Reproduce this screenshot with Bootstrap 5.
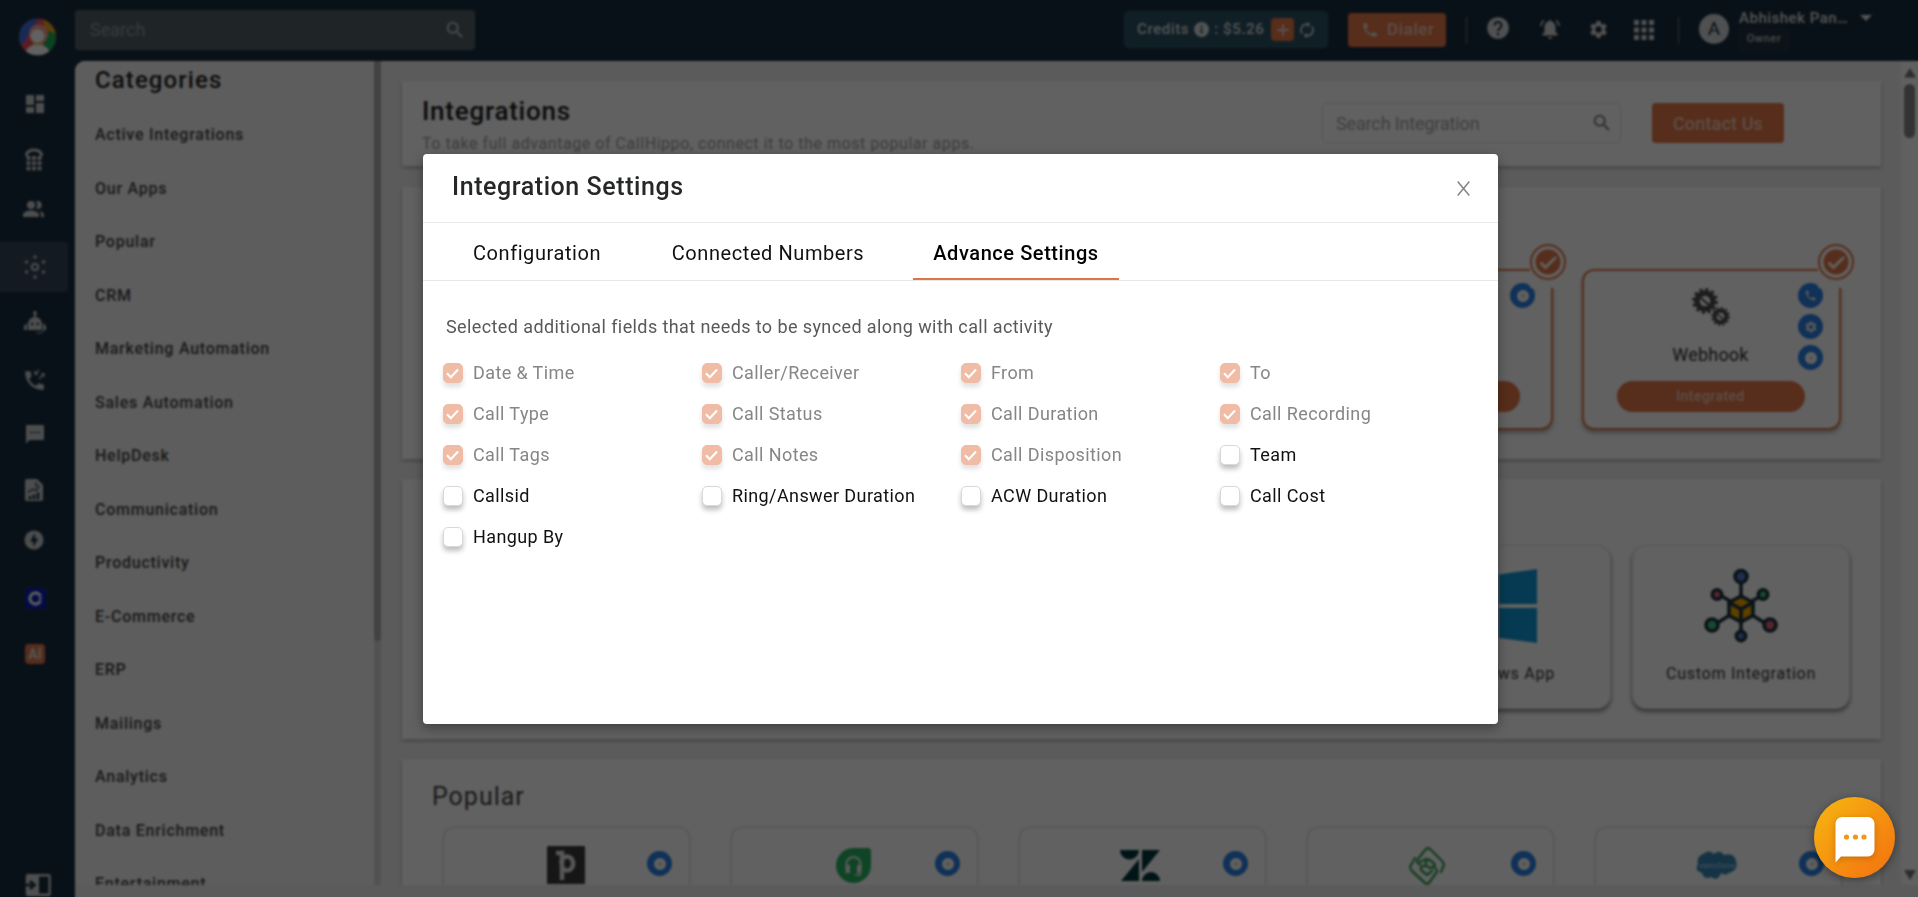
<!DOCTYPE html>
<html lang="en">
<head>
<meta charset="utf-8">
<title>Integration Settings</title>
<link href="https://cdn.jsdelivr.net/npm/bootstrap@5.3.0/dist/css/bootstrap.min.css" rel="stylesheet">
<style>
:root{--navy:#1a2f3f;--brand:#e57647;--blue:#2b80e6;--soft:#c8ccce}
body{font-family:Roboto,"Liberation Sans",sans-serif;letter-spacing:.6px;height:897px;overflow:hidden;background:var(--navy);color:#333}
svg{display:block;flex:none}
.app-shell{height:897px;background:var(--navy)}
.rail{width:75px;flex:none;position:relative;color:var(--soft)}
.rail .cell{height:50px;width:68px;padding-left:2px}
.rail .cell.on{background:#35465a;border-radius:0 4px 4px 0}
.topbar{height:61px;color:#d8dcde}
.find{width:400px;height:40px;background:#536068;border-radius:4px;color:#93999d;font-size:18px;letter-spacing:0;padding:0 9px 0 15px;margin-top:-2px}
.credits{width:204px;height:37px;background:#2c5264;border-radius:5px;font-size:15px;font-weight:500;padding-left:13px;margin-top:-2px}
.plus{width:23px;height:23px;background:var(--brand);border-radius:4px;margin-left:7px}
.dialer{width:98px;height:34px;background:var(--brand);border-radius:4px;font-size:17px;font-weight:500;color:#efcdbf;margin-left:20px;padding-left:13px;margin-top:-2px}
.vline{width:1px;height:27px;background:#66747e}
.user{font-size:15px;font-weight:500;line-height:20px;height:20px}
.user span{width:121px;letter-spacing:.5px}
.owner{background:#21343f;border-radius:3px;width:50px;height:23px;font-size:11px;font-weight:500;color:#b9c0c4}
.panel-area{height:836px;border-radius:10px 0 0 0;overflow:hidden;background:#f0f0f0}
.cats{width:299px;height:824px;overflow:hidden;background:#f5f5f5;padding-left:20px}
.cats h2{font-size:24px;font-weight:500;letter-spacing:1.1px;line-height:28px;margin:5px 0 14px;color:#222}
.cats li{height:53.5px;line-height:53.5px;font-size:16px;font-weight:500;letter-spacing:.75px;color:#444}
.bar-v{width:7px;height:824px;background:#d8d8d8}
.bar-v div{height:580px;background:#adadad;border-radius:0 0 4px 4px}
.feed{width:1520px;height:824px;overflow:hidden;padding:20px 20px 0 21px}
.sheet{background:#fff;box-shadow:0 2px 4px rgba(0,0,0,.25);margin-bottom:20px}
.page-title{font-size:26px;font-weight:500;line-height:30px;letter-spacing:.75px;color:#1c1c1c}
.page-sub{font-size:16px;line-height:24px;margin-top:6px;color:#a0a0a0;letter-spacing:.55px}
.find-int{width:299px;height:40px;margin-top:22px;padding:0 7px 0 13px;font-size:18px;color:#a6a6a6;letter-spacing:-.15px}
.contact{width:132px;height:40px;margin:22px 0 0 31px;background:var(--brand);border-radius:4px;font-size:18px;font-weight:500;color:#efcdbf;letter-spacing:.15px}
.page-bar{width:17px;height:824px;background:#fcfcfc}
.tile{border-radius:12px;background:#fff;position:relative;flex:none}
.tile.on{width:259px;height:161px;border:2px solid var(--brand);box-shadow:0 3px 4px rgba(0,0,0,.3)}
.tile.own{width:218px;height:164px;border:1px solid #e4e4e4;box-shadow:0 3px 4px rgba(0,0,0,.45);border-radius:14px}
.tile.pop{width:247px;height:150px;border:1px solid #ddd;box-shadow:0 0 3px rgba(0,0,0,.15)}
.tile.pop>svg{margin-right:2px}
.tile.pop .disc{margin-top:11px}
.tick{position:absolute;right:-17px;top:-27px;width:38px;height:44px;background:#fff}
.dots{position:absolute;right:16px;top:12px}
.pop .dots{right:17px}
.disc{width:25px;height:25px;border-radius:50%;background:var(--blue)}
.pill{width:188px;height:31px;border-radius:16px;background:var(--brand);color:#efcdbf;font-size:14px;font-weight:500;letter-spacing:.45px;margin-right:2px}
.foot{height:12px;background:#eeeef2}
.shade{position:absolute;inset:0;background:rgba(0,0,0,.62);backdrop-filter:blur(1.1px)}
.dlg{position:absolute;left:423px;top:154px;width:1075px;height:570px;background:#fff;border-radius:4px;box-shadow:0 4px 12px rgba(0,0,0,.35)}
.dlg-head{height:69px;border-bottom:1px solid #e8e8e8;padding:0 28px 0 29px}
.dlg-head h1{font-size:25px;font-weight:500;color:#262828;letter-spacing:.57px;margin:0 0 2px}
.tabs{height:58px;border-bottom:1px solid #e8e8e8;padding-left:31px;font-size:20px;letter-spacing:.57px;color:#111}
.tabs div{height:57px;line-height:60px;text-align:center;border-bottom:2px solid transparent}
.tabs .cur{border-color:#df7646;font-weight:500;color:#000}
.note{font-size:18px;line-height:24px;margin:34px 0 13px 23px;color:#595959;letter-spacing:.4px}
.opts{display:grid;grid-template-columns:repeat(4,259px);grid-auto-rows:41px;padding-left:20px;font-size:18px;color:#111;letter-spacing:.4px}
.box{width:20px;height:20px;border-radius:5px;border:1px solid #d9d9d9;background:#fff;box-shadow:0 4px 5px rgba(0,0,0,.25);margin-right:10px;flex:none}
.off{color:#868686}
.off .box{background:#f0bca6;border-color:#f0bca6;box-shadow:0 4px 5px rgba(0,0,0,.12)}
.chat{position:absolute;left:1814px;top:797px;width:81px;height:81px;border-radius:50%;background:linear-gradient(135deg,#f6b411 5%,#f4730f 95%);box-shadow:0 2px 8px rgba(0,0,0,.4)}
</style>
</head>
<body>
<svg width="0" height="0" style="position:absolute">
 <defs>
  <symbol id="search" viewBox="0 0 24 24"><path d="M15.500 14h-.79l-.28-.27A6.470 6.470 0 0 0 16 9.500 6.500 6.500 0 1 0 9.500 16c1.610 0 3.090-.59 4.230-1.570l.27.28v.79l5 4.990L20.490 19zm-6 0a4.500 4.500 0 1 1 0-9 4.500 4.500 0 0 1 0 9z"/></symbol>
  <symbol id="phone" viewBox="0 0 24 24"><path d="M20 15.500c-1.250 0-2.450-.2-3.570-.57a1 1 0 0 0-1.020.24l-2.200 2.200a15.050 15.050 0 0 1-6.590-6.590l2.200-2.210a.96.96 0 0 0 .25-1A11.360 11.360 0 0 1 8.500 4a1 1 0 0 0-1-1H4a1 1 0 0 0-1 1c0 9.390 7.610 17 17 17a1 1 0 0 0 1-1v-3.500a1 1 0 0 0-1-1z"/></symbol>
  <symbol id="cog" viewBox="0 0 24 24"><path d="M19.140 12.940a7.070 7.070 0 0 0 0-1.880l2.030-1.580a.49.49 0 0 0 .12-.61l-1.920-3.320a.49.49 0 0 0-.59-.22l-2.390.96a7 7 0 0 0-1.620-.94l-.36-2.540a.48.48 0 0 0-.48-.41h-3.840a.47.47 0 0 0-.47.41l-.36 2.540c-.59.24-1.130.57-1.620.94l-2.390-.96a.48.48 0 0 0-.59.22L2.740 8.870a.47.47 0 0 0 .12.61l2.030 1.580a7.300 7.300 0 0 0 0 1.880l-2.030 1.580a.49.49 0 0 0-.12.61l1.920 3.320c.12.22.37.290.59.220l2.390-.96c.5.380 1.030.7 1.620.94l.36 2.540c.05.24.24.41.48.41h3.840c.24 0 .44-.17.47-.41l.36-2.540c.59-.24 1.130-.56 1.620-.94l2.390.96c.22.08.47 0 .59-.22l1.920-3.320a.47.47 0 0 0-.12-.61zM12 15.600a3.600 3.600 0 1 1 0-7.200 3.600 3.600 0 0 1 0 7.200z"/></symbol>
  <symbol id="tickmark" viewBox="0 0 36 36"><circle cx="18" cy="18" r="17" fill="#fff" stroke="#e57647" stroke-width="2"/><circle cx="18" cy="18" r="12.500" fill="#e57647"/><path d="M10.500 18.500l5 5 10.500-10.500" fill="none" stroke="#fff" stroke-width="2.800"/></symbol>
  <symbol id="globe" viewBox="0 0 12 12"><circle cx="6" cy="6" r="6" fill="#fff"/><circle cx="6" cy="6" r="2.300" fill="#dadada"/></symbol>
  <symbol id="gearbig" viewBox="0 0 24 24"><circle cx="12" cy="12" r="7.300" fill="none" stroke="#4c4c4c" stroke-width="5"/><circle cx="12" cy="12" r="10.600" fill="none" stroke="#4c4c4c" stroke-width="2.600" stroke-dasharray="2.900 2.650"/><path d="M8 9l8 7" stroke="#4c4c4c" stroke-width="2"/></symbol>
  <symbol id="ticksm" viewBox="0 0 18 18"><path d="M3 9.300l3.800 3.900L14 5.500" fill="none" stroke="#fff" stroke-width="2"/></symbol>
 </defs>
</svg>

<div class="app-shell d-flex">
 <nav class="rail">
  <div class="d-flex align-items-start justify-content-center" style="height:79px;padding-top:18px">
   <svg width="37" height="38" viewBox="0 0 38 38"><defs><clipPath id="lc"><circle cx="19" cy="19" r="19"/></clipPath></defs><g clip-path="url(#lc)"><rect width="38" height="38" fill="#ef4c5c"/><path d="M0 0h20L4 26H0z" fill="#3c6fe0"/><path d="M25 0l13 8v8l-12-2z" fill="#f2a715"/><path d="M28 12l10 4v22H24z" fill="#1dab56"/><circle cx="20" cy="16" r="10" fill="#f3a09a"/><path d="M14 16h11v12H14z" fill="#e8b469"/><circle cx="19" cy="18" r="7" fill="#fff"/><path d="M6 38q1-11 13-11t13 11z" fill="#fff"/></g></svg>
  </div>
  <div class="cell d-flex align-items-center justify-content-center"><svg width="18" height="18" fill="currentColor"><path d="M0 0h8v10H0zM10 0h8v6h-8zM0 12h8v6H0zM10 8h8v10h-8z"/></svg></div>
  <div class="cell d-flex align-items-center justify-content-center" style="height:61px;padding-left:0"><svg width="18" height="24" viewBox="0 0 18 24" fill="none" stroke="currentColor"><path d="M1.500 8Q1.500 2 9 2t7.500 6" stroke-width="3"/><path d="M3.500 8v15M9 8v15M14.500 8v15" stroke-width="3.900" stroke-dasharray="3.900 1.300"/></svg></div>
  <div class="cell d-flex align-items-center justify-content-center" style="height:38px;padding-left:0"><svg width="22" height="16" viewBox="0 0 22 16" fill="currentColor"><circle cx="8" cy="4" r="4"/><path d="M0 16v-2c0-3 4-4.500 8-4.500s8 1.500 8 4.500v2zM13 .4a4 4 0 1 1 0 7.200 6 6 0 0 0 0-7.200zM16 10c3 .5 5 2 5 4v2h-3v-2c0-2-.8-3.200-2-4z"/></svg></div>
  <div style="height:14px"></div>
  <div class="cell on d-flex align-items-center justify-content-center"><svg width="22" height="24" viewBox="0 0 22 24" fill="#bcc1c6"><circle cx="11" cy="12" r="3.200" fill="none" stroke="#bcc1c6" stroke-width="2.200"/><circle cx="11" cy="2" r="1.800"/><circle cx="11" cy="22" r="1.800"/><circle cx="2.500" cy="7" r="1.800"/><circle cx="19.500" cy="7" r="1.800"/><circle cx="2.500" cy="17" r="1.800"/><circle cx="19.500" cy="17" r="1.800"/></svg></div>
  <div class="cell d-flex align-items-center justify-content-center" style="height:62px"><svg width="22" height="24" viewBox="0 0 22 24" fill="currentColor"><circle cx="11" cy="2" r="1.900"/><path d="M10 3h2v4h-2z"/><path d="M4 19v-6a7 7 0 0 1 14 0v6zM0 19v-4l3-3v7zM19 12l3 3v4h-3z"/><circle cx="8.300" cy="13" r="1.200" fill="#1a2f3f"/><circle cx="13.700" cy="13" r="1.200" fill="#1a2f3f"/><path d="M19.500 19q0 3-7 3" fill="none" stroke="currentColor"/></svg></div>
  <div class="cell d-flex align-items-center justify-content-center" style="height:52px"><svg width="22" height="22" viewBox="0 0 22 22"><svg x="-2" y="-1" width="25" height="25" fill="currentColor"><use href="#phone"/></svg><path d="M15 1l-4 4m0-3v3h3M15 10l5-5m-3 0h3v3" stroke="currentColor" fill="none" stroke-width="1.300"/></svg></div>
  <div class="cell d-flex align-items-center justify-content-center" style="height:56px"><svg width="20" height="20" fill="currentColor"><path d="M2 1h16a1 1 0 0 1 1 1v13a1 1 0 0 1-1 1H4.500L1 19.500V2a1 1 0 0 1 1-1z"/><path d="M5 8.500h2.200M8.900 8.500h2.200M12.800 8.500H15" stroke="#1a2f3f" stroke-width="1.600"/></svg></div>
  <div class="cell d-flex align-items-center justify-content-center" style="height:56px;padding-left:0"><svg width="20" height="24" fill="currentColor"><path d="M3 1h10l6 6v14a2 2 0 0 1-2 2H3a2 2 0 0 1-2-2V3a2 2 0 0 1 2-2z"/><path d="M6 18v3.500M10 16.500v5M14 14.500v7" stroke="#1a2f3f" stroke-width="2.600"/><path d="M4 14.500q5-5 8-2l3-3M12 4v4h4" stroke="#1a2f3f" stroke-width="1.200" fill="none"/></svg></div>
  <div class="cell d-flex align-items-center justify-content-center" style="height:44px;padding-left:0"><svg width="20" height="20"><circle cx="10" cy="10" r="9.500" fill="currentColor"/><path d="M11 3l-5 8.500h3.300V17l5-8.500H11z" fill="#1a2f3f"/></svg></div>
  <div class="cell d-flex align-items-center justify-content-center" style="height:72px"><svg width="21" height="21"><rect width="21" height="21" rx="3" fill="#0a1fb8"/><circle cx="10.500" cy="10.500" r="5.500" fill="none" stroke="#e4e4f4" stroke-width="3.400"/><path d="M11 10.500l7-3.500v7z" fill="#0a1fb8"/><circle cx="15.300" cy="10.500" r="1.700" fill="#ccd"/></svg></div>
  <div class="cell d-flex align-items-center justify-content-center" style="height:40px"><div class="rounded-1 d-flex align-items-center justify-content-center" style="width:20px;height:20px;background:#e0774a;color:#ddd;font-size:14px;font-weight:700;letter-spacing:0">AI</div></div>
  <div style="height:199px"></div>
  <div class="d-flex" style="padding-left:25px"><svg width="27" height="24"><rect x=".8" y="1" width="25" height="22" rx="2" fill="#ccd0d2"/><rect x="14" y="3.500" width="9.500" height="17" fill="#1a2f3f"/><path d="M0 12h7M5 8l4.500 4L5 16" stroke="#1a2f3f" stroke-width="2.600" fill="none"/></svg></div>
 </nav>

 <div class="flex-grow-1">
  <header class="topbar d-flex align-items-center">
   <div class="find d-flex align-items-center justify-content-between"><span>Search</span><svg width="22" height="22" fill="#c6cacc"><use href="#search"/></svg></div>
   <div class="credits d-flex align-items-center" style="margin-left:649px"><span>Credits</span>
    <svg width="15" height="15" style="margin:0 5px"><circle cx="7.500" cy="7.500" r="7.500" fill="#d8dcde"/><path d="M7.500 6.500v5M7.500 3.500v2" stroke="#2c5264" stroke-width="1.800"/></svg><span>: $5.26</span>
    <div class="plus d-flex align-items-center justify-content-center"><svg width="12" height="12"><path d="M6 0v12M0 6h12" stroke="#e9d9d2" stroke-width="1.800"/></svg></div>
    <svg width="16" height="16" viewBox="0 0 16 16" style="margin-left:5px"><path d="M3.200 11.500A5.600 5.600 0 0 1 8.500 2.500M12.800 4.500A5.600 5.600 0 0 1 7.500 13.500" fill="none" stroke="#d8dcde" stroke-width="1.600"/><path d="M8 0l3.500 2.500L8 5zM8 11l-3.500 2.500L8 16z" fill="#d8dcde"/></svg></div>
   <div class="dialer d-flex align-items-center"><svg width="18" height="18" fill="#e9d9d2" class="me-2"><use href="#phone"/></svg><span>Dialer</span></div>
   <div class="vline" style="margin-left:20px"></div>
   <svg width="22" height="22" viewBox="0 0 22 22" style="margin:-5px 0 0 20px"><circle cx="11" cy="11" r="10.800" fill="#d0d3d5"/><path d="M7.500 8.500a3.500 3.500 0 1 1 5.500 2.800q-2 1.400-2 3" fill="none" stroke="#1a2f3f" stroke-width="2"/><path d="M10 16h2v2.200h-2z" fill="#1a2f3f"/></svg>
   <svg width="22" height="22" viewBox="0 0 22 22" fill="#d0d3d5" style="margin:-3px 0 0 30px"><path d="M11 2a1.500 1.500 0 0 1 1.500 1.500c2.800.7 4 3 4 5.500v5l2 2v1.500h-15V16l2-2V9c0-2.500 1.200-4.800 4-5.500A1.500 1.500 0 0 1 11 2zM9 19h4a2 2 0 0 1-4 0z"/><path d="M1.800 8q.3-3.500 3-5.600M20.200 8q-.3-3.500-3-5.600" fill="none" stroke="#d0d3d5" stroke-width="1.700"/></svg>
   <svg width="21" height="21" fill="#d0d3d5" style="margin:-3px 0 0 27px"><use href="#cog"/></svg>
   <svg width="20" height="20" fill="#d0d3d5" style="margin:-2px 0 0 25px"><path d="M0 0h5v5H0zM7.500 0h5v5h-5zM15 0h5v5h-5zM0 7.500h5v5H0zM7.500 7.500h5v5h-5zM15 7.500h5v5h-5zM0 15h5v5H0zM7.500 15h5v5h-5zM15 15h5v5h-5z"/></svg>
   <div class="vline" style="margin-left:24px"></div>
   <div class="rounded-circle d-flex align-items-center justify-content-center" style="width:30px;height:30px;margin:-3px 0 0 20px;background:#cfd2d4;color:#1a2f3f;font-size:19px;letter-spacing:0">A</div>
   <div style="margin:-3px 0 0 10px;height:43px"><div class="user d-flex"><span>Abhishek Pan…</span><svg width="12" height="6" style="margin-top:7px"><path d="M0 0h12L6 6z" fill="#d8dcde"/></svg></div><div class="owner d-flex align-items-center justify-content-center">Owner</div></div>
  </header>

  <div class="panel-area">
   <div class="d-flex">
    <aside class="cats">
     <h2>Categories</h2>
     <ul class="list-unstyled m-0"><li>Active Integrations</li><li>Our Apps</li><li>Popular</li><li>CRM</li><li>Marketing Automation</li><li>Sales Automation</li><li>HelpDesk</li><li>Communication</li><li>Productivity</li><li>E-Commerce</li><li>ERP</li><li>Mailings</li><li>Analytics</li><li>Data Enrichment</li><li>Entertainment</li></ul>
    </aside>
    <div class="bar-v"><div></div></div>
    <main class="feed">
     <section class="sheet d-flex" style="height:85px;margin-bottom:21px">
      <div style="padding:15px 0 0 20px;width:920px"><div class="page-title">Integrations</div><div class="page-sub">To take full advantage of CallHippo, connect it to the most popular apps.</div></div>
      <div class="find-int d-flex align-items-center justify-content-between border rounded-1"><span>Search Integration</span><svg width="22" height="22" fill="#777"><use href="#search"/></svg></div>
      <div class="contact d-flex align-items-center justify-content-center">Contact Us</div>
     </section>

     <section class="sheet d-flex justify-content-end" style="height:272px;padding:82px 40px 0 0;gap:29px">
      <div class="tile on d-flex justify-content-center" style="padding-top:110px"><div class="pill" style="margin-right:-5px"></div>
       <div class="dots"><div class="disc d-flex align-items-center justify-content-center"><svg width="12" height="12"><use href="#globe"/></svg></div></div>
       <div class="tick"><svg width="36" height="36"><use href="#tickmark"/></svg></div></div>
      <div class="tile on d-flex flex-column align-items-center" style="padding-top:17px">
       <svg width="38" height="38" viewBox="0 0 38 38" style="margin-right:2px"><svg width="26" height="26"><use href="#gearbig"/></svg><svg x="19" y="19" width="19" height="19"><use href="#gearbig"/></svg></svg>
       <div style="font-size:18px;line-height:24px;color:#333;margin-top:17px;letter-spacing:.2px;margin-right:2px">Webhook</div>
       <div class="pill d-flex align-items-center justify-content-center" style="margin-top:14px">Integrated</div>
       <div class="dots d-flex flex-column" style="gap:6px"><div class="disc d-flex align-items-center justify-content-center"><svg width="13" height="13" fill="#e8e8e8"><use href="#phone"/></svg></div><div class="disc d-flex align-items-center justify-content-center"><svg width="14" height="14" fill="#e8e8e8"><use href="#cog"/></svg></div><div class="disc d-flex align-items-center justify-content-center"><svg width="12" height="12"><use href="#globe"/></svg></div></div>
       <div class="tick"><svg width="36" height="36"><use href="#tickmark"/></svg></div></div>
     </section>

     <section class="sheet d-flex justify-content-end" style="height:260px;padding:66px 31px 0 0;gap:21px;font-size:16px;color:#3a3a3a;letter-spacing:.75px">
      <div class="tile own d-flex flex-column align-items-center" style="padding-top:23px"><svg width="74" height="74" viewBox="0 0 74 74" fill="#0f9ad8" style="margin-right:4px"><path d="M0 10l32-4v29H0zM36 5.500L74 0v35H36zM0 39h32v29L0 64zM36 39h38v35l-38-5z"/></svg><div style="margin-top:19px">Windows App</div></div>
      <div class="tile own d-flex flex-column align-items-center" style="padding-top:22px"><svg width="74" height="76" viewBox="0 0 74 76" stroke="#1b3340" stroke-width="3.600"><path d="M37 12v26M37 40v26M14 26l12 7M61 26L48 33M10 57l16-10M64 57L48 47"/><path d="M37 28l12 6.500v13L37 54l-12-6.500v-13z" fill="#f2a900"/><path d="M25 34.500L37 41l12-6.500M37 41v13" fill="none"/><circle cx="37" cy="8.500" r="6" fill="#5379c8"/><circle cx="13" cy="26.500" r="4.700" fill="#e0636f"/><circle cx="59" cy="26.500" r="4.700" fill="#3fc17b"/><circle cx="8" cy="57" r="6" fill="#3fc17b"/><circle cx="66" cy="57" r="6" fill="#e0636f"/><circle cx="37" cy="68" r="4.700" fill="#5379c8"/></svg><div style="margin-top:18px">Custom Integration</div></div>
     </section>

     <section class="sheet" style="height:260px;padding:22px 0 0 30px">
      <div style="font-size:25px;line-height:32px;letter-spacing:1px;color:#444">Popular</div>
      <div class="d-flex" style="gap:41px;margin:14px 0 0 11px">
       <div class="tile pop d-flex justify-content-center" style="padding-top:18px"><svg width="38" height="38"><rect width="38" height="38" rx="1" fill="#3b3b3b"/><path d="M9 7h6v27M14.500 18V15a6 7 0 1 1 0 5" fill="none" stroke="#e3e3e3" stroke-width="4.500"/></svg><div class="dots"><div class="disc d-flex align-items-center justify-content-center"><svg width="12" height="12"><use href="#globe"/></svg></div></div></div>
       <div class="tile pop d-flex justify-content-center" style="padding-top:20px"><svg width="35" height="35"><path d="M17.500 0H32a3 3 0 0 1 3 3v14.500A17.500 17.500 0 1 1 17.500 0z" fill="#28b463"/><path d="M10.500 21v-5a7 7 0 0 1 14 0v5" fill="none" stroke="#ececec" stroke-width="2"/><path d="M9.500 17h4.500v8h-4.500zM21 17h4.500v8H21z" fill="#ececec"/><path d="M24 24v3h-5" fill="none" stroke="#ececec" stroke-width="1.500"/></svg><div class="dots"><div class="disc d-flex align-items-center justify-content-center"><svg width="12" height="12"><use href="#globe"/></svg></div></div></div>
       <div class="tile pop d-flex justify-content-center" style="padding-top:22px"><svg width="40" height="32" fill="#03363d" style="margin-right:6px"><path d="M0 0h19a9.500 9.500 0 0 1-19 0zM19 9v22H1zM22 0h18L22 22zM22 31a9 9 0 0 1 18 0z"/></svg><div class="dots"><div class="disc d-flex align-items-center justify-content-center"><svg width="12" height="12"><use href="#globe"/></svg></div></div></div>
       <div class="tile pop d-flex justify-content-center" style="padding-top:19px"><svg width="38" height="38" viewBox="0 0 38 38" fill="none" stroke="#3aa35a" stroke-width="2.400" stroke-linejoin="round" stroke-linecap="round" style="margin-right:8px"><path d="M12 18l-2-2q-2-2 0-4l8-10q2-1.500 4 0l12 12q3 3.500 1 6l-2 5M26 20l2 2q2 2 0 4l-7 10q-2 1.500-4 0L4 24q-3-3.500-1-6l4-7"/><path d="M12 15l6-3q6 1 9 6-2 3-5 3-4-3-7-2-3 2-2 4l6 5 5-4M18 12v5"/></svg><div class="dots"><div class="disc d-flex align-items-center justify-content-center"><svg width="12" height="12"><use href="#globe"/></svg></div></div></div>
       <div class="tile pop d-flex justify-content-center" style="padding-top:23px"><svg width="42" height="30" style="margin-right:4px"><path d="M7 3q6-5 11 0 6-5 10 1 10-3 12 6 3 9-7 12-4 3-8 0-3 9-10 4-7 3-9-4Q-2 20 2 13 0 6 7 3z" fill="#3787b5"/><text x="21" y="17" font-size="8" font-style="italic" fill="#b8d5e4" text-anchor="middle" letter-spacing="0">salesforce</text></svg><div class="dots"><div class="disc d-flex align-items-center justify-content-center"><svg width="12" height="12"><use href="#globe"/></svg></div></div></div>
      </div>
     </section>
    </main>
    <div class="page-bar d-flex flex-column align-items-center justify-content-between"><div><svg width="12" height="10" style="margin:7px 0 6px"><path d="M0 9.500L6 0l6 9.500z" fill="#777"/></svg><div style="width:11px;height:54px;border-radius:6px;background:#868686"></div></div><svg width="12" height="10" style="margin-bottom:5px"><path d="M0 0h12L6 10z" fill="#777"/></svg></div>
   </div>
   <div class="foot"></div>
  </div>
 </div>
</div>

<div class="shade"></div>

<div class="dlg" role="dialog">
 <div class="dlg-head d-flex align-items-center justify-content-between"><h1>Integration Settings</h1><svg width="13" height="15" viewBox="0 0 13 15" style="margin-top:1px"><path d="M.7.5l11.600 14M12.300.5L.7 14.500" stroke="#858585" stroke-width="1.500"/></svg></div>
 <div class="tabs d-flex"><div style="width:166px">Configuration</div><div style="width:232px;margin-left:32px;margin-right:-2px">Connected Numbers</div><div class="cur" style="width:206px;margin-left:31px">Advance Settings</div></div>
 <div class="note">Selected additional fields that needs to be synced along with call activity</div>
 <div class="opts" id="opts"></div>
</div>

<div class="chat d-flex align-items-center justify-content-center"><svg width="40" height="46" viewBox="0 0 40 46" style="filter:drop-shadow(0 2px 3px rgba(120,50,0,.35));margin-top:4px"><path d="M7 0h26a6.500 6.500 0 0 1 6.500 6.500V33a6.500 6.500 0 0 1-6.500 6.500H6L.5 45.500v-39A6.500 6.500 0 0 1 7 0z" fill="#fff"/><g fill="#f39814"><circle cx="11.500" cy="20" r="2.600"/><circle cx="20.500" cy="20" r="2.600"/><circle cx="29" cy="20" r="2.600"/></g></svg></div>

<script>
const locked=['Date & Time','Caller/Receiver','From','To','Call Type','Call Status','Call Duration','Call Recording','Call Tags','Call Notes','Call Disposition'];
const open=['Team','Callsid','Ring/Answer Duration','ACW Duration','Call Cost','Hangup By'];
const root=document.getElementById('opts');
for(const name of [...locked,...open]){
  const on=locked.includes(name), el=document.createElement('label');
  el.className='d-flex align-items-center text-nowrap'+(on?' off':'');
  el.innerHTML='<span class="box">'+(on?'<svg width="18" height="18"><use href="#ticksm"/></svg>':'')+'</span><span></span>';
  el.lastChild.textContent=name;
  root.append(el);
}
</script>
<script src="https://cdn.jsdelivr.net/npm/bootstrap@5.3.0/dist/js/bootstrap.bundle.min.js"></script>
</body>
</html>
